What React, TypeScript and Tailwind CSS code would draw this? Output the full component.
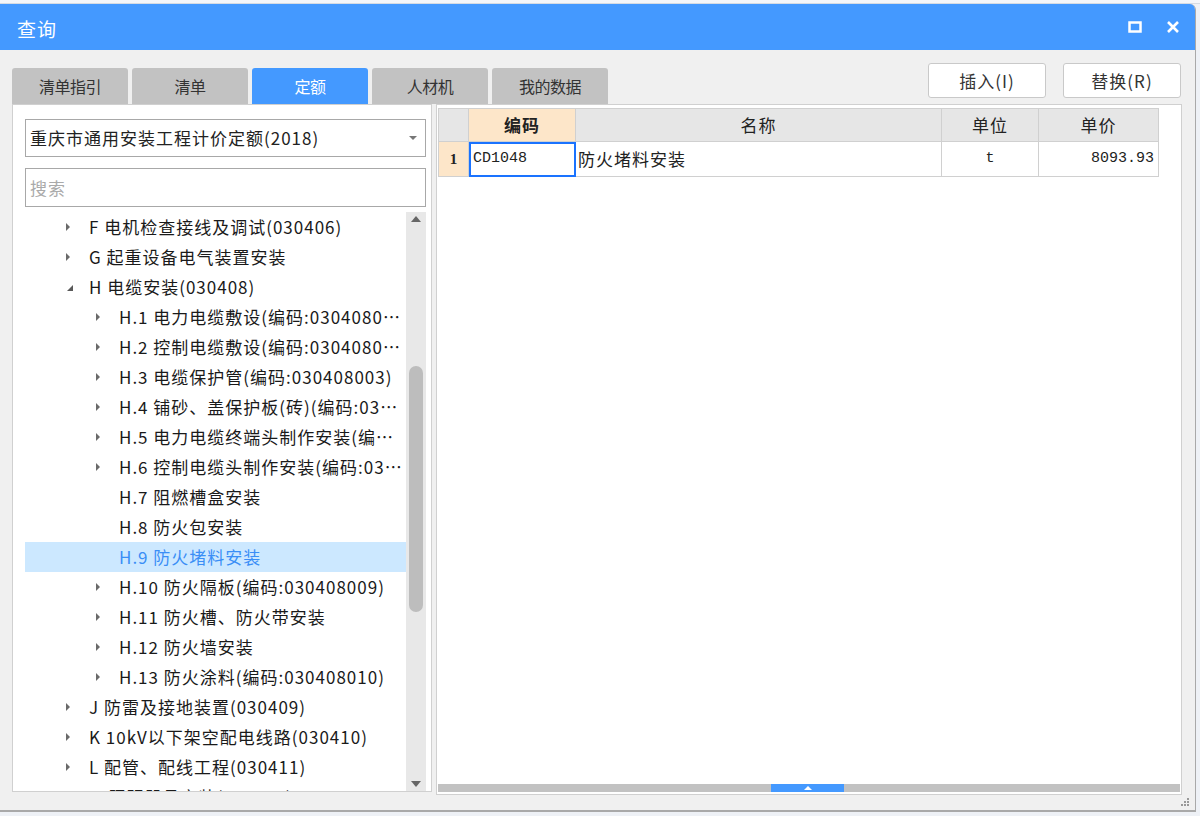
import React from "react";

const FONT = { fontFamily: '"Noto Sans CJK SC", "Noto Sans", sans-serif' };
const MONO = { fontFamily: '"Liberation Mono", "DejaVu Sans Mono", monospace' };

type Row = { text: string; level: 1 | 2; arrow: "right" | "down" | "none"; selected?: boolean };

const rows: Row[] = [
  { text: "F 电机检查接线及调试(030406)", level: 1, arrow: "right" },
  { text: "G 起重设备电气装置安装", level: 1, arrow: "right" },
  { text: "H 电缆安装(030408)", level: 1, arrow: "down" },
  { text: "H.1 电力电缆敷设(编码:030408001)", level: 2, arrow: "right" },
  { text: "H.2 控制电缆敷设(编码:030408002)", level: 2, arrow: "right" },
  { text: "H.3 电缆保护管(编码:030408003)", level: 2, arrow: "right" },
  { text: "H.4 铺砂、盖保护板(砖)(编码:030408004)", level: 2, arrow: "right" },
  { text: "H.5 电力电缆终端头制作安装(编码:030408006)", level: 2, arrow: "right" },
  { text: "H.6 控制电缆头制作安装(编码:030408007)", level: 2, arrow: "right" },
  { text: "H.7 阻燃槽盒安装", level: 2, arrow: "none" },
  { text: "H.8 防火包安装", level: 2, arrow: "none" },
  { text: "H.9 防火堵料安装", level: 2, arrow: "none", selected: true },
  { text: "H.10 防火隔板(编码:030408009)", level: 2, arrow: "right" },
  { text: "H.11 防火槽、防火带安装", level: 2, arrow: "right" },
  { text: "H.12 防火墙安装", level: 2, arrow: "right" },
  { text: "H.13 防火涂料(编码:030408010)", level: 2, arrow: "right" },
  { text: "J 防雷及接地装置(030409)", level: 1, arrow: "right" },
  { text: "K 10kV以下架空配电线路(030410)", level: 1, arrow: "right" },
  { text: "L 配管、配线工程(030411)", level: 1, arrow: "right" },
  { text: "M 照明器具安装(030412)", level: 1, arrow: "right" },
];

function Arrow({ kind }: { kind: Row["arrow"] }) {
  if (kind === "none") return <span className="w-[24px] shrink-0" />;
  if (kind === "down")
    return (
      <span className="w-[24px] shrink-0 flex items-center">
        <svg width="8" height="8" viewBox="0 0 8 8" className="ml-[1px] mt-[2px]">
          <polygon points="7,1 7,7 1,7" fill="#595959" />
        </svg>
      </span>
    );
  return (
    <span className="w-[24px] shrink-0 flex items-center">
      <svg width="6" height="10" viewBox="0 0 6 10">
        <polygon points="1,1 5,5 1,9" fill="#6a6a6a" />
      </svg>
    </span>
  );
}

function Tab({ label, active }: { label: string; active?: boolean }) {
  return (
    <div
      className={
        "w-[116px] h-[36px] rounded-t-[3px] flex items-center justify-center text-[16px] tracking-[-0.5px] " +
        (active ? "bg-[#4499ff] text-white" : "bg-[#c2c2c2] text-[#333]")
      }
    >
      {label}
    </div>
  );
}

export default function App() {
  return (
    <div className="w-[1200px] h-[816px] bg-[#eef1f6] overflow-hidden relative" style={FONT}>
      <div className="h-[4px] w-full bg-[#f4f6fa] border-b border-[#d6dbe3]" />
      <div className="w-[1196px] h-[808px] flex flex-col rounded-tr-[6px] overflow-hidden border-b-2 border-r border-[#a9a9a9]">
        {/* title bar */}
        <div className="h-[46px] bg-[#4499ff] flex items-center pl-[17px] pr-[15px] shrink-0">
          <span className="text-white text-[19px] tracking-[1px] mt-[5px]">查询</span>
          <div className="ml-auto flex items-center gap-[24px]">
            <svg width="14" height="12" viewBox="0 0 14 12">
              <rect x="1.5" y="1.5" width="11" height="9" fill="none" stroke="white" strokeWidth="2.5" />
            </svg>
            <svg width="14" height="14" viewBox="0 0 14 14">
              <path d="M2 2 L12 12 M12 2 L2 12" stroke="white" strokeWidth="2.6" />
            </svg>
          </div>
        </div>
        {/* body */}
        <div className="flex-1 bg-[#f0f0f0] flex flex-col px-[12px] relative">
          <div className="flex items-end h-[54px] shrink-0">
            <div className="flex gap-[4px]">
              <Tab label="清单指引" />
              <Tab label="清单" />
              <Tab label="定额" active />
              <Tab label="人材机" />
              <Tab label="我的数据" />
            </div>
            <div className="ml-auto self-start mt-[13px] flex gap-[17px] pr-[2px]">
              <button className="w-[118px] h-[35px] bg-white border border-[#c9c9c9] rounded-[3px] text-[17px] tracking-[1px] text-[#333]">
                插入(I)
              </button>
              <button className="w-[118px] h-[35px] bg-white border border-[#c9c9c9] rounded-[3px] text-[17px] tracking-[1px] text-[#333]">
                替换(R)
              </button>
            </div>
          </div>
          {/* panels */}
          <div className="flex gap-[4px] h-[690px]">
            {/* left panel */}
            <div className="w-[420px] h-[688px] bg-white border border-[#d0d0d0] flex flex-col pl-[12px] pr-[6px]">
              <div className="mt-[14px] h-[38px] w-[401px] border border-[#a8a8a8] flex items-center pl-[4px] pr-[8px] text-[17px] tracking-[1px] text-[#222]">
                <span>重庆市通用安装工程计价定额(2018)</span>
                <svg className="ml-auto" width="8" height="5" viewBox="0 0 8 5">
                  <polygon points="0,0 8,0 4,4" fill="#777" />
                </svg>
              </div>
              <div className="mt-[11px] h-[39px] w-[401px] border border-[#a8a8a8] flex items-center pl-[4px] text-[17px] tracking-[1px] text-[#aaa]">
                搜索
              </div>
              <div className="mt-[5px] flex h-[579px] w-[401px]">
                <div className="flex-1 min-w-0 overflow-hidden">
                  {rows.map((r, i) => (
                    <div
                      key={i}
                      className={
                        "h-[30px] flex items-center text-[17px] tracking-[1px] whitespace-nowrap pr-[2px] " +
                        (r.selected ? "bg-[#cce8ff] text-[#3a8ef6]" : "text-[#1a1a1a]")
                      }
                      style={{ paddingLeft: r.level === 1 ? 40 : 70 }}
                    >
                      <Arrow kind={r.arrow} />
                      <span className="truncate min-w-0">{r.text}</span>
                    </div>
                  ))}
                </div>
                <div className="w-[20px] h-full bg-[#e8e8e8] flex flex-col items-center shrink-0">
                  <svg className="mt-[4px]" width="10" height="6" viewBox="0 0 10 6">
                    <polygon points="0,6 10,6 5,0" fill="#666" />
                  </svg>
                  <div className="mt-[144px] w-[14px] h-[246px] rounded-full bg-[#bdbdbd]" />
                  <svg className="mt-auto mb-[4px]" width="10" height="6" viewBox="0 0 10 6">
                    <polygon points="0,0 10,0 5,6" fill="#666" />
                  </svg>
                </div>
              </div>
            </div>
            {/* right panel */}
            <div className="w-[746px] h-[691px] bg-white border border-[#d0d0d0] flex flex-col pl-[1px] pt-[3px]">
              <div className="flex-1">
                <div className="flex h-[34px] text-[17px] tracking-[1px] text-[#222]">
                  <div className="w-[31px] bg-[#e6e6e6] border border-[#d0d0d0]" />
                  <div className="w-[107px] bg-[#fde6c9] border-y border-r border-[#d0d0d0] flex items-center justify-center font-bold">
                    编码
                  </div>
                  <div className="w-[366px] bg-[#e6e6e6] border-y border-r border-[#d0d0d0] flex items-center justify-center">
                    名称
                  </div>
                  <div className="w-[97px] bg-[#e6e6e6] border-y border-r border-[#d0d0d0] flex items-center justify-center">
                    单位
                  </div>
                  <div className="w-[120px] bg-[#e6e6e6] border-y border-r border-[#d0d0d0] flex items-center justify-center">
                    单价
                  </div>
                </div>
                <div className="flex h-[35px] text-[#222]">
                  <div
                    className="w-[31px] bg-[#fde6c9] border-x border-b border-[#d0d0d0] flex items-center justify-center font-bold text-[15px]"
                    style={{ fontFamily: '"Liberation Serif", serif' }}
                  >
                    1
                  </div>
                  <div className="w-[107px] border-2 border-[#1a73ff] flex items-center pl-[2px] text-[15px]" style={MONO}>
                    CD1048
                  </div>
                  <div className="w-[366px] border-b border-r border-[#d0d0d0] flex items-center pl-[2px] text-[17px] tracking-[1px]">
                    防火堵料安装
                  </div>
                  <div className="w-[97px] border-b border-r border-[#d0d0d0] flex items-center justify-center text-[15px]" style={MONO}>
                    t
                  </div>
                  <div className="w-[120px] border-b border-r border-[#d0d0d0] flex items-center justify-end pr-[4px] text-[15px]" style={MONO}>
                    8093.93
                  </div>
                </div>
              </div>
              <div className="h-[8px] bg-[#c2c2c2] mb-[2px] mr-[1px] flex">
                <div className="ml-[333px] w-[73px] h-full bg-[#4499ff] flex items-center justify-center">
                  <svg width="8" height="4" viewBox="0 0 8 4">
                    <polygon points="0,4 8,4 4,0" fill="white" />
                  </svg>
                </div>
              </div>
            </div>
          </div>
          <div className="absolute right-[6px] bottom-[4px] grid grid-cols-3 gap-[1px]">
            <span className="w-[2px] h-[2px]" />
            <span className="w-[2px] h-[2px]" />
            <span className="w-[2px] h-[2px] bg-[#999]" />
            <span className="w-[2px] h-[2px]" />
            <span className="w-[2px] h-[2px] bg-[#999]" />
            <span className="w-[2px] h-[2px] bg-[#999]" />
            <span className="w-[2px] h-[2px] bg-[#999]" />
            <span className="w-[2px] h-[2px] bg-[#999]" />
            <span className="w-[2px] h-[2px] bg-[#999]" />
          </div>
        </div>
      </div>
    </div>
  );
}
